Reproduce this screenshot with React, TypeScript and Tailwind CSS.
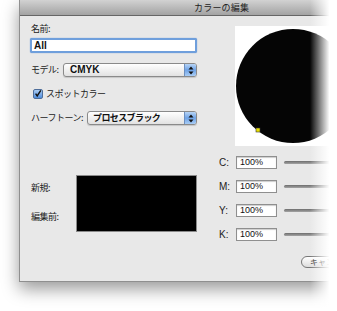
import React from "react";

const jp = { fontFamily: '"Noto Sans CJK JP", "Noto Sans", sans-serif' };
const lat = { fontFamily: '"Liberation Sans", "DejaVu Sans", sans-serif' };

function Arrows() {
  return (
    <svg width="6" height="9" viewBox="0 0 6 9">
      <path d="M3 0.5 L5.5 3.5 L0.5 3.5 Z" fill="#111" />
      <path d="M3 8.5 L5.5 5.5 L0.5 5.5 Z" fill="#111" />
    </svg>
  );
}

function Select({ label, width }: { label: string; width: string }) {
  const isLat = label === "CMYK";
  return (
    <div
      className={`h-[14px] ${width} flex rounded-[3px] border border-[#8a8a8a] bg-gradient-to-b from-white to-[#e2e2e2] shadow-[0_1px_1px_rgba(0,0,0,0.15)] overflow-hidden`}
    >
      <div
        className={
          isLat
            ? "flex-1 pl-[6px] text-[10px] leading-[12px] font-bold text-[#111] whitespace-nowrap"
            : "flex-1 pl-[5px] text-[9px] leading-[12px] font-bold tracking-[-0.6px] text-[#111] whitespace-nowrap"
        }
        style={isLat ? lat : jp}
      >
        {label}
      </div>
      <div className="w-[12px] flex items-center justify-center bg-gradient-to-b from-[#b7d4f5] via-[#6fa3e6] to-[#a9cdf5] border-l border-[#6d8fbf]">
        <Arrows />
      </div>
    </div>
  );
}

function Row({ l }: { l: string }) {
  return (
    <div className="flex items-center h-[13px]">
      <div className="w-[17px] text-[10px] leading-[12px] text-[#222]" style={lat}>
        {l}:
      </div>
      <div
        className="w-[41px] h-[13px] bg-white border border-[#8f8f8f] shadow-[inset_0_1px_1px_rgba(0,0,0,0.2)] pl-[3px] text-[9px] leading-[11px] text-[#111]"
        style={lat}
      >
        100%
      </div>
      <div className="ml-[7px] flex-1 h-[3px] rounded-full bg-gradient-to-b from-[#6d6d6d] to-[#a5a5a5]" />
    </div>
  );
}

const lbl = "text-[9px] leading-[12px] tracking-[-0.5px] text-[#222] whitespace-nowrap";

export default function App() {
  return (
    <div className="w-[337px] h-[311px] bg-white relative overflow-hidden pl-[19px]">
      <div className="w-[340px] h-[282px] flex flex-col bg-[#e8e8e8] border-l border-b border-[#8f8f8f] shadow-[0_7px_16px_rgba(0,0,0,0.4)]">
        <div className="h-[16px] shrink-0 bg-gradient-to-b from-[#d2d2d2] to-[#a3a3a3] border-b border-[#666666] pl-[174px]">
          <div className="text-[9px] leading-[15px] text-[#222] tracking-[0.2px]" style={jp}>
            カラーの編集
          </div>
        </div>
        <div className="flex flex-1">
          <div className="w-[177px] pl-[10px] pt-[7px] flex flex-col">
            <div className={`pl-px ${lbl}`} style={jp}>
              名前:
            </div>
            <div className="mt-[3px] h-[15px] w-[167px] rounded-[2px] border-2 border-[#6f9fdc] bg-white shadow-[0_0_1px_#4d84cf] pl-[2px]">
              <div className="text-[10px] leading-[11px] font-bold text-[#111]" style={lat}>
                All
              </div>
            </div>
            <div className="mt-[10px] flex items-center">
              <div className={`w-[33px] pl-px ${lbl}`} style={jp}>
                モデル:
              </div>
              <Select label="CMYK" width="w-[134px]" />
            </div>
            <div className="mt-[11px] flex items-center h-[11px] pl-[3px]">
              <div className="w-[10px] h-[10px] rounded-[2px] border border-[#4d6d9a] bg-gradient-to-b from-[#a9cbf2] to-[#4f8ddc] flex items-center justify-center">
                <svg width="10" height="10" viewBox="0 0 10 10">
                  <path d="M2 4.5 L4 7.5 L8.5 0.5" stroke="#111" strokeWidth="1.8" fill="none" />
                </svg>
              </div>
              <div className={`ml-[3px] ${lbl}`} style={jp}>
                スポットカラー
              </div>
            </div>
            <div className="mt-[12px] flex items-center">
              <div className={`w-[57px] pl-px ${lbl}`} style={jp}>
                ハーフトーン:
              </div>
              <Select label="プロセスブラック" width="w-[110px]" />
            </div>
            <div className="mt-[50px] flex">
              <div className={`w-[46px] pt-[7px] pl-px flex flex-col gap-[17px] ${lbl}`} style={jp}>
                <div>新規:</div>
                <div>編集前:</div>
              </div>
              <div className="w-[121px] h-[57px] bg-black border border-[#8a8a8a]" />
            </div>
          </div>
          <div className="flex-1 pt-[10px] flex flex-col">
            <div className="ml-[38px] w-[120px] h-[120px] bg-white">
              <svg width="120" height="120" viewBox="0 0 120 120">
                <circle cx="58" cy="60" r="57" fill="#050505" />
                <rect x="21" y="102" width="4" height="4" fill="#e8e000" stroke="#333" strokeWidth="0.6" />
              </svg>
            </div>
            <div className="ml-[22px] mt-[10px] flex flex-col gap-[11px]">
              <Row l="C" />
              <Row l="M" />
              <Row l="Y" />
              <Row l="K" />
            </div>
            <div className="ml-[104px] mt-[15px] h-[12px] w-[70px] rounded-full border border-[#777] bg-gradient-to-b from-white to-[#dcdcdc] pl-[8px]">
              <div className="text-[8px] leading-[10px] text-[#222] whitespace-nowrap" style={jp}>
                キャンセル
              </div>
            </div>
          </div>
        </div>
      </div>
      <div className="absolute top-0 right-0 w-[27px] h-full pointer-events-none bg-[linear-gradient(to_right,rgba(255,255,255,0),#ffffff_72%)]" />
    </div>
  );
}
